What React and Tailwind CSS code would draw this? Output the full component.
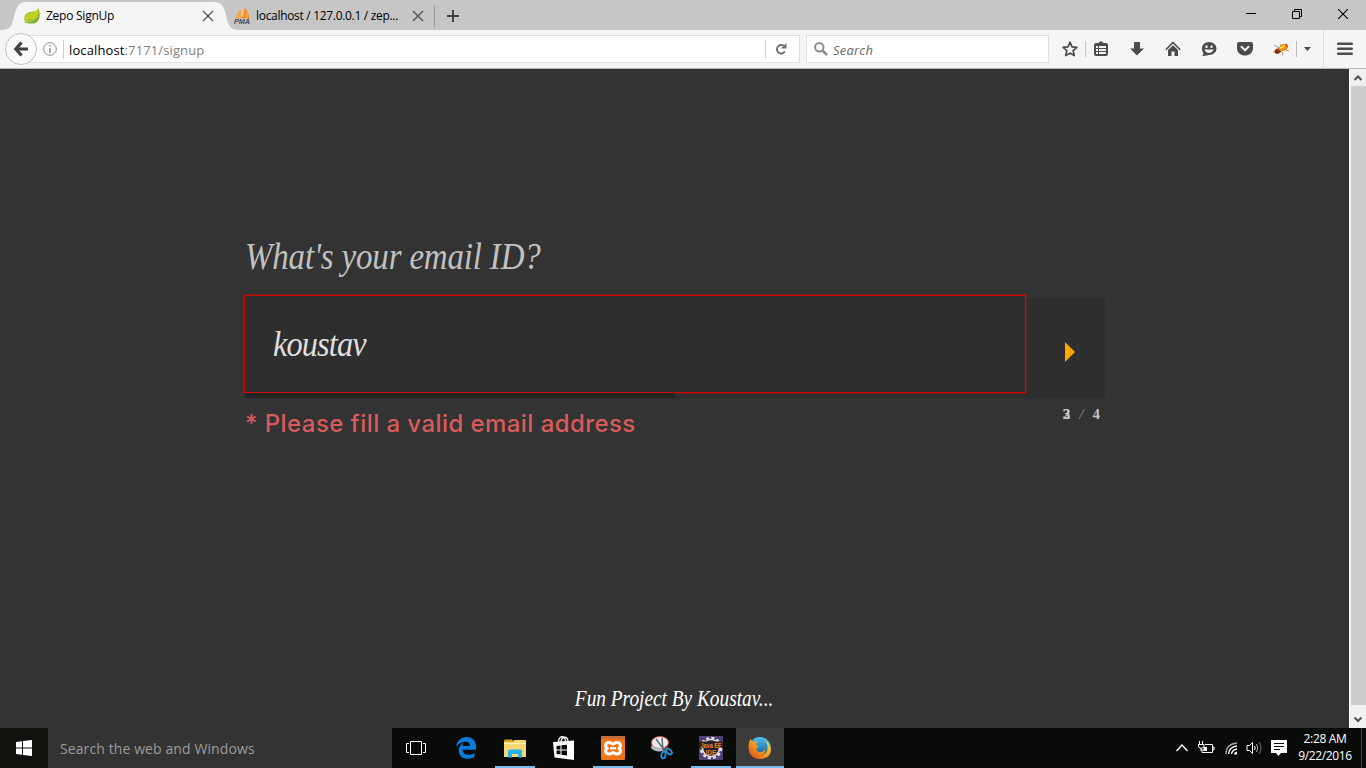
import React from "react";

const ui = "font-['Open_Sans','Noto_Sans',sans-serif]";
const script = "font-['Liberation_Serif',serif] italic";

function TabClose() {
  return (
    <svg width="12" height="12" viewBox="0 0 12 12" className="shrink-0" stroke="#4c4c4c" strokeWidth="1.2">
      <path d="M1 1 11 11M11 1 1 11" />
    </svg>
  );
}

function TabStrip() {
  return (
    <header className="flex h-[30px] shrink-0 bg-[#c6c6c6] text-[12px] text-black">
      <div className="flex w-[240px] items-end">
        <svg width="26" height="28" viewBox="0 0 26 28" className="shrink-0">
          <path d="M0 28C13 28 12 21 14.500 13C17 4 19 0 26 0V28Z" fill="#f5f5f5" />
        </svg>
        <div className="flex h-[28px] w-[188px] items-center bg-[#f5f5f5]">
          <svg width="16" height="16" viewBox="0 0 16 16" className="-ml-[2px] shrink-0">
            <path d="M1 14.500C-.5 9 1 5 6 4C11 3.500 13 3 14.500 0C17 7 15.500 13.500 11 15C8 16 4 15.500 1 14.500Z" fill="#7fae28" />
            <path d="M1 10C2 5 6 4.500 9 4C12 3.500 13.500 2.500 14.500 0C16 6 14 9 9 11C6 12 3 12 1.500 14C.5 12 .5 10.500 1 10Z" fill="#c3d021" />
            <path d="M2 14C7 13.500 11 12 14 8" stroke="#e8ee8c" strokeWidth=".7" fill="none" />
          </svg>
          <span className="ml-[6px] w-[156px] whitespace-nowrap tracking-[-0.25px]">Zepo SignUp</span>
          <TabClose />
        </div>
        <svg width="26" height="28" viewBox="0 0 26 28" className="shrink-0">
          <path d="M0 0C8 0 10 5 12 13C14 22 15 28 26 28H0Z" fill="#f5f5f5" />
        </svg>
      </div>
      <div className="flex items-center pt-[2px]">
        <svg width="17" height="16" viewBox="0 0 17 16" className="-ml-[6px] shrink-0">
          <path d="M7 1V10L2 11C2 7 4 3 7 1Z" fill="#f7a84b" />
          <path d="M10.500 0C14 3 15 6 15.500 11L7.500 10C9 6 10.500 4 10.500 0Z" fill="#f48a1d" />
          <path d="M9 2V9M13 4V10" stroke="#fbd19b" strokeWidth=".7" />
          <text x="0" y="15.500" fontFamily="Liberation Sans" fontWeight="bold" fontStyle="italic" fontSize="6.500" textLength="16" lengthAdjust="spacingAndGlyphs" fill="#444669">PMA</text>
        </svg>
        <span className="ml-[5px] w-[156px] whitespace-nowrap tracking-[-0.31px]">localhost / 127.0.0.1 / zep...</span>
        <TabClose />
        <span className="ml-[10px] h-[22px] w-px bg-[#999]" />
        <svg width="12" height="12" viewBox="0 0 12 12" className="ml-[12px]">
          <path d="M6 0V12M0 6H12" stroke="#404040" strokeWidth="2" />
        </svg>
      </div>
      <div className="ml-auto flex items-center gap-[36px] pr-[18px] pb-[2px]">
        <svg width="10" height="10" viewBox="0 0 10 10"><path d="M0 4.500H10" stroke="#000" /></svg>
        <svg width="10" height="10" viewBox="0 0 10 10" fill="none" stroke="#000">
          <path d="M.5 2.500H7.500V9.500H.5ZM2.500 2.500V.5H9.500V7.500H7.500" />
        </svg>
        <svg width="10" height="10" viewBox="0 0 10 10" stroke="#000" strokeWidth="1.100"><path d="M0 0 10 10M10 0 0 10" /></svg>
      </div>
    </header>
  );
}

function ToolbarIcons() {
  return (
    <div className="flex h-full flex-1 items-center pl-[13px] text-[#4c4c4c]">
      <svg width="16" height="16" viewBox="0 0 16 16" fill="none" stroke="currentColor" strokeWidth="1.700">
        <path d="M8 1.200 10 5.800 14.900 6.300 11.200 9.700 12.300 14.600 8 12.200 3.700 14.600 4.800 9.700 1.100 6.300 6 5.800Z" strokeLinejoin="round" />
      </svg>
      <span className="ml-[7px] h-[16px] w-px bg-[#c6c6c6]" />
      <svg width="16" height="16" viewBox="0 0 16 16" className="ml-[7px]">
        <path d="M3 2H5.500L8 0 10.500 2H13Q15 2 15 4V13Q15 15 13 15H3Q1 15 1 13V4Q1 2 3 2Z" fill="currentColor" />
        <path d="M3 5H5V7H3ZM6 5H13V7H6ZM3 8H5V10H3ZM6 8H13V10H6ZM3 11H5V13H3ZM6 11H13V13H6Z" fill="#f5f5f5" />
      </svg>
      <svg width="16" height="16" viewBox="0 0 16 16" className="ml-[20px]" fill="currentColor">
        <path d="M5 1.500Q5 1 5.500 1H10.500Q11 1 11 1.500V7.500H15L8 14.500 1 7.500H5Z" />
      </svg>
      <svg width="16" height="16" viewBox="0 0 16 16" className="ml-[20px]">
        <path d="M.8 8.700 8 1.500 15.200 8.700" stroke="currentColor" strokeWidth="1.600" fill="none" />
        <path d="M3 9 8 4.300 13 9V15H9.500V10.500H6.500V15H3Z" fill="currentColor" />
      </svg>
      <svg width="16" height="16" viewBox="0 0 16 16" className="ml-[20px]">
        <path d="M8 1C12 1 15.500 3.900 15.500 7.500S12 14 8 14C6.500 14 4 15.300 1 14.800C2.500 13.800 2.800 12.500 2 11.500C-.8 7 2 1 8 1Z" fill="currentColor" />
        <path d="M4.500 4.500H6.500V7H4.500ZM9.500 4.500H11.500V7H9.500ZM3.500 8.500H12.500C11.500 13 4.500 13 3.500 8.500Z" fill="#f5f5f5" />
      </svg>
      <svg width="16" height="16" viewBox="0 0 16 16" className="ml-[20px]">
        <path d="M2 1H14Q16 1 16 3V7C16 17 0 17 0 7V3Q0 1 2 1Z" fill="currentColor" />
        <path d="M4.500 5.800 8 9.300 11.500 5.800" fill="none" stroke="#f5f5f5" strokeWidth="2" strokeLinecap="round" strokeLinejoin="round" />
      </svg>
      <svg width="16" height="16" viewBox="0 0 16 16" className="ml-[20px]">
        <path d="M1 4 6 7M0 11 6 9M4 13 8 10M9 11 10 14M13 9 16 10M7 3 8 5" stroke="#a39573" />
        <ellipse cx="5" cy="10" rx="3.500" ry="2.400" transform="rotate(-25 5 10)" fill="#7a3009" />
        <ellipse cx="10.500" cy="6.500" rx="5" ry="3.300" transform="rotate(-28 10.500 6.500)" fill="#ef8b12" />
        <path d="M7 7.500 12 4.500" stroke="#ffe04d" strokeWidth="2" />
        <path d="M13 3 14 6M4 8 6 10" stroke="#d83a12" strokeWidth="1.200" />
      </svg>
      <span className="ml-[7px] h-[16px] w-px bg-[#bcbcbc]" />
      <svg width="7" height="4" viewBox="0 0 7 4" className="ml-[7px]"><path d="M0 0H7L3.500 4Z" fill="currentColor" /></svg>
      <span className="ml-[12px] h-full w-px bg-[#dedede]" />
      <svg width="16" height="14" viewBox="0 0 16 14" className="ml-[13px]">
        <path d="M1.300 1.700H14.700M1.300 6.700H14.700M1.300 11.700H14.700" stroke="currentColor" strokeWidth="2.600" strokeLinecap="round" />
      </svg>
    </div>
  );
}

function NavBar() {
  return (
    <nav className="flex h-[39px] shrink-0 items-center border-b border-[#b8b8b8] bg-[#f5f5f5] pl-[5px]">
      <div className="z-10 flex size-[32px] shrink-0 items-center justify-center rounded-full border border-[#c3c3c3] bg-[#fafafa]">
        <svg width="16" height="16" viewBox="0 0 16 16" fill="none" stroke="#404040" strokeWidth="3.200">
          <path d="M8.500 1.500 2.800 8 8.500 14.500M3 8H15" />
        </svg>
      </div>
      <div className="-ml-[10px] flex h-[28px] w-[773px] shrink-0 items-center border border-[#dfdfdf] bg-white pl-[15px]">
        <svg width="14" height="14" viewBox="0 0 14 14" fill="none" stroke="#8a8a8a">
          <circle cx="7" cy="7" r="6.300" />
          <path d="M7 6V11M7 3.200V4.800" strokeWidth="1.500" />
        </svg>
        <span className="ml-[6px] h-[19px] w-px bg-[#ccc]" />
        <span className="ml-[5px] flex-1 whitespace-nowrap pt-[3px] text-[13px] tracking-[0.12px] text-[#808080]">
          <span className="text-black">localhost</span>:7171/signup
        </span>
        <span className="h-[19px] w-px bg-[#ccc]" />
        <svg width="12" height="12" viewBox="0 0 12 12" className="mr-[12px] ml-[9px]">
          <path d="M8.800 2.800A4.300 4.300 0 1 0 9.800 8.600" fill="none" stroke="#6e6e6e" strokeWidth="1.900" />
          <path d="M11.500 0V5.500H6Z" fill="#6e6e6e" />
        </svg>
      </div>
      <div className="ml-[6px] flex h-[28px] w-[243px] shrink-0 items-center border border-[#dfdfdf] bg-white pl-[7px]">
        <svg width="14" height="14" viewBox="0 0 14 14" fill="none" stroke="#8c8c8c" strokeWidth="2">
          <circle cx="5.300" cy="5.300" r="4.200" /><path d="M8.500 8.500 13 13" strokeWidth="2.500" />
        </svg>
        <span className="ml-[5px] pt-[3px] text-[13px] tracking-[0.2px] text-[#6a6a6a] italic">Search</span>
      </div>
      <ToolbarIcons />
    </nav>
  );
}

function Signup() {
  return (
    <main className="flex flex-1 flex-col bg-[#333]">
      <div className="ml-[245px] flex w-[860px] flex-col pt-[159px]">
        <h1 className={`flex h-[56px] w-fit origin-left scale-x-[0.868] items-center whitespace-nowrap text-[38px] leading-none tracking-[-0.2px] text-[#c1c1c1] ${script}`}>
          What's your email ID?
        </h1>
        <div className="mt-[14px] flex h-[100px] flex-col bg-[#2e2e2e]">
          <div className="-mt-[3px] flex h-[98px] shrink-0">
            <div className="-ml-px flex w-[782px] items-center border border-[#cb0b0b] bg-[#2e2e2e] pl-[28px] shadow-[0_0_2px_#e00000]">
              <span className={`origin-left scale-x-[0.9] text-[36px] leading-none tracking-[-1px] text-[#dedede] ${script}`}>koustav</span>
            </div>
            <div className="flex flex-1 items-center pt-[16px] pl-[39px]">
              <svg width="10" height="20" viewBox="0 0 10 20"><path d="M0 0 10 10 0 20Z" fill="#ffa500" /></svg>
            </div>
          </div>
          <div className="h-[5px] w-[430px] bg-[#242424]" />
        </div>
        <div className="flex justify-between">
          <p className="mt-[8px] whitespace-nowrap font-['Inter',sans-serif] text-[24px] font-medium tracking-[0.43px] text-[#d95b5b]">* Please fill a valid email address</p>
          <div className="mt-[8px] mr-[5px] flex h-[17px] items-center font-['Liberation_Serif',serif] text-[15px] font-bold text-[#c5c5c5]">
            <span className="grid"><span className="col-start-1 row-start-1">2</span><span className="col-start-1 row-start-1">3</span></span>
            <span className="mx-[9px] font-normal italic text-[#888]">/</span>
            <span>4</span>
          </div>
        </div>
      </div>
      <footer className={`mt-auto mb-[13px] scale-x-[0.805] pr-px text-center text-[24px] leading-[34px] text-white ${script}`}>Fun Project By Koustav...</footer>
    </main>
  );
}

function ScrollBar() {
  return (
    <div className="flex w-[17px] flex-col items-center border-l border-white bg-[#f0f0f0]">
      <svg width="16" height="17" viewBox="0 0 16 17"><path d="M4.500 11 8 7.500 11.500 11" fill="none" stroke="#505050" strokeWidth="2" /></svg>
      <div className="h-[619px] w-[15px] bg-[#cdcdcd]" />
      <svg width="16" height="23" viewBox="0 0 16 23"><path d="M4.500 12.500 8 16 11.500 12.500" fill="none" stroke="#505050" strokeWidth="2" /></svg>
    </div>
  );
}

function TaskItem({ open, active, children, wide }) {
  return (
    <div className={`flex h-full flex-col items-center ${wide ? "w-[48px]" : "w-[40px]"} ${active ? "bg-[#3b3c3a]" : ""}`}>
      <div className="flex flex-1 items-center pt-[2px]">{children}</div>
      <div className={`h-[2px] w-full ${open ? "bg-[#76b9ed]" : ""}`} />
    </div>
  );
}

function TaskBar() {
  return (
    <footer className="flex h-[40px] shrink-0 bg-[#090b09]">
      <div className="flex w-[48px] items-center justify-center bg-[#11120d]">
        <svg width="16" height="16" viewBox="0 0 16 16" fill="#fff"><path d="M0 2 6 1.200V7.500H0ZM7 1 16 0V7.500H7ZM0 8.500H6V14.800L0 14ZM7 8.500H16V16L7 15Z" /></svg>
      </div>
      <div className="flex w-[344px] items-center bg-[#333] pl-[12px] text-[14px] tracking-[0.1px] text-[#9b9b9b]">Search the web and Windows</div>
      <div className="ml-[4px] flex">
        <TaskItem>
          <svg width="20" height="14" viewBox="0 0 20 14" fill="none" stroke="#fff"><path d="M4.500.5H15.500V13.500H4.500ZM3 2.500H.5V11.500H3M17 2.500H19.500V11.500H17" /></svg>
        </TaskItem>
        <div className="w-[10px]" />
        <TaskItem>
          <svg width="20" height="22" viewBox="0 0 20 22" fill="#0b7ad8">
            <path d="M0 9.800C1 3.800 5 0 10.500 0C16.500 0 20 4 20 9.500V12.700H6.500C6.800 18.700 14.500 19 18.500 16V20C12.500 23.500 2.700 22 2.700 13.500C2.700 10.200 4.500 7.400 8 5.600C6.900 6.900 6.600 8 6.500 9H14C14 3 5 3.700 0 9.800Z" />
          </svg>
        </TaskItem>
        <div className="w-[9px]" />
        <TaskItem open>
          <svg width="22" height="19" viewBox="0 0 22 19">
            <path d="M0 2Q0 .5 1.500.5H8L10 3H0Z" fill="#e0a52c" /><path d="M10 1H21Q22 1 22 2V18H0V3H9Z" fill="#f8d775" />
            <path d="M0 4H22V5H0Z" fill="#fff0b2" /><path d="M4 18.500V12Q4 10.500 5.500 10.500H17Q18 10.500 18 12V18.500H14V15H8V18.500Z" fill="#26b5ee" />
          </svg>
        </TaskItem>
        <div className="w-[9px]" />
        <TaskItem>
          <svg width="22" height="24" viewBox="0 0 22 24">
            <path d="M5.500 7C5.500-1 12-1 12.500 5M8 7C8 0 15-1 15 6" fill="none" stroke="#fff" strokeWidth="1.300" />
            <path d="M0 6 21 4.500V24L1.500 21.500Z" fill="#fff" />
            <path d="M3.500 10 7.500 9.500V13.500H3.500ZM8.500 9.300 14 8.700V13.500H8.500ZM3.500 14.500H7.500V18.500L3.500 18ZM8.500 14.500H14V19.500L8.500 18.700Z" fill="#080a09" />
          </svg>
        </TaskItem>
        <div className="w-[9px]" />
        <TaskItem open>
          <svg width="24" height="24" viewBox="0 0 24 24">
            <rect width="24" height="24" rx="1.500" fill="#ef7519" /><path d="M0 0H24V3H0Z" fill="#c46c37" />
            <path d="M8 6.500C4.500 6.500 3.500 10 6 12.300C3.500 14.500 4.500 18 8 18C10.500 18 11 16.500 12 16.500S13.500 18 16 18C19.500 18 20.500 14.500 18 12.300C20.500 10 19.500 6.500 16 6.500C13.500 6.500 13 8 12 8S10.500 6.500 8 6.500Z" fill="none" stroke="#fff" strokeWidth="3" />
            <path d="M9 12.300H15" stroke="#fff" strokeWidth="2.200" />
          </svg>
        </TaskItem>
        <div className="w-[9px]" />
        <TaskItem>
          <svg width="22" height="24" viewBox="0 0 22 24">
            <ellipse cx="8.500" cy="8.500" rx="8.500" ry="6.500" fill="#bb2730" /><ellipse cx="9" cy="6.500" rx="8.500" ry="6" fill="#e9ecec" stroke="#d34b50" />
            <path d="M1 9Q6 14 14 11L12 15Q4 16.500 0 12Z" fill="#b9bdc2" />
            <path d="M5 3 14 15M11 2 12 14" stroke="#56666f" strokeWidth="1.400" />
            <ellipse cx="12.500" cy="19" rx="2" ry="3.500" transform="rotate(15 12.500 19)" fill="none" stroke="#2299dc" strokeWidth="1.800" />
            <ellipse cx="18" cy="15.500" rx="2" ry="3.500" transform="rotate(-45 18 15.500)" fill="none" stroke="#2299dc" strokeWidth="1.800" />
          </svg>
        </TaskItem>
        <div className="w-[9px]" />
        <TaskItem open>
          <svg width="24" height="24" viewBox="0 0 24 24" className="overflow-visible">
            <rect width="24" height="24" fill="#514078" />
            <circle cx="12" cy="12" r="9.800" fill="none" stroke="#dedede" strokeWidth="3" strokeDasharray="3 2.130" /><circle cx="12" cy="12" r="8.500" fill="#24212a" stroke="#ddd" strokeWidth="1.500" />
            <path d="M0 5.500H24V12H0Z" fill="#2b2127" />
            <g fontFamily="Liberation Sans" fontWeight="bold" fill="#ef821e">
              <text x="1.500" y="11.500" fontSize="7" textLength="21" lengthAdjust="spacingAndGlyphs">Java EE</text><text x="6.500" y="18.500" fontSize="8" textLength="11" lengthAdjust="spacingAndGlyphs">IDE</text>
            </g>
          </svg>
        </TaskItem>
        <div className="w-[5px]" />
        <TaskItem open active wide>
          <svg width="24" height="24" viewBox="0 0 24 24">
            <defs>
              <linearGradient id="fire" x1="1" y1="0" x2="0" y2="1"><stop stopColor="#ffe13b" /><stop offset=".5" stopColor="#f69a1c" /><stop offset="1" stopColor="#d6421b" /></linearGradient>
              <linearGradient id="globe" x1="0" y1="0" x2="0" y2="1"><stop stopColor="#51c1ed" /><stop offset="1" stopColor="#0b4792" /></linearGradient>
            </defs>
            <circle cx="12" cy="12" r="11" fill="url(#globe)" />
            <path d="M2.500 3 5 6 9 5.500 8 9 11 10.500 8 12.500C9 17 15 17.500 17 13C18 16 15 19 12 19C21 19 21 9 17 4C26 9 25 23 12 23C-1 23-1 9 2.500 3Z" fill="url(#fire)" />
          </svg>
        </TaskItem>
      </div>
      <div className="ml-auto flex items-center text-white">
        <svg width="12" height="8" viewBox="0 0 12 8" fill="none" stroke="currentColor" strokeWidth="1.400"><path d="M.5 7 6 1 11.500 7" /></svg>
        <svg width="17" height="14" viewBox="0 0 17 14" className="ml-[10px]" fill="none" stroke="currentColor">
          <path d="M7 3.500H14.500V11.500H4V8M14.500 6H16V9H14.500M1.500 0V3M4.500 0V3M0 3.500H6V6Q3 9 .5 6V3M3 7V10" /><path d="M6 6H9V10H5Z" fill="currentColor" stroke="none" />
        </svg>
        <svg width="13" height="13" viewBox="0 0 13 13" className="ml-[10px]" fill="none" stroke="currentColor" strokeWidth="1.300">
          <path d="M1 12Q1 2 12 1" opacity=".65" /><path d="M3.500 12Q4 5 12 4M6.500 12Q7 8 12 7" /><path d="M9 12.500Q9 10 12 9.500V12.500Z" fill="currentColor" stroke="none" />
        </svg>
        <svg width="17" height="14" viewBox="0 0 17 14" className="ml-[8px]" fill="none" stroke="currentColor">
          <path d="M1 4.500H3.500L6.500 1.500V12.500L3.500 9.500H1ZM8.500 5Q10 7 8.500 9" /><path d="M10.500 3Q13 7 10.500 11" opacity=".65" /><path d="M13 1Q17 7 13 13" opacity=".4" />
        </svg>
        <svg width="16" height="16" viewBox="0 0 16 16" className="ml-[8px]"><path d="M0 0H16V13H10L7.500 16 5 13H0Z" fill="currentColor" /><path d="M3 3.500H13M3 6.500H13M3 9.500H9" stroke="#090b09" /></svg>
        <div className="-mt-[2px] ml-[11px] w-[54px] text-center text-[12px] leading-[17px] tracking-[-0.35px] whitespace-nowrap"><div>2:28 AM</div><div>9/22/2016</div></div>
        <div className="ml-[9px] h-[40px] w-px bg-[#454745]" /><div className="w-[4px]" />
      </div>
    </footer>
  );
}

export default function App() {
  return (
    <div className={`flex h-screen w-screen flex-col overflow-hidden ${ui}`}>
      <TabStrip />
      <NavBar />
      <div className="flex min-h-0 flex-1"><Signup /><ScrollBar /></div>
      <TaskBar />
    </div>
  );
}
